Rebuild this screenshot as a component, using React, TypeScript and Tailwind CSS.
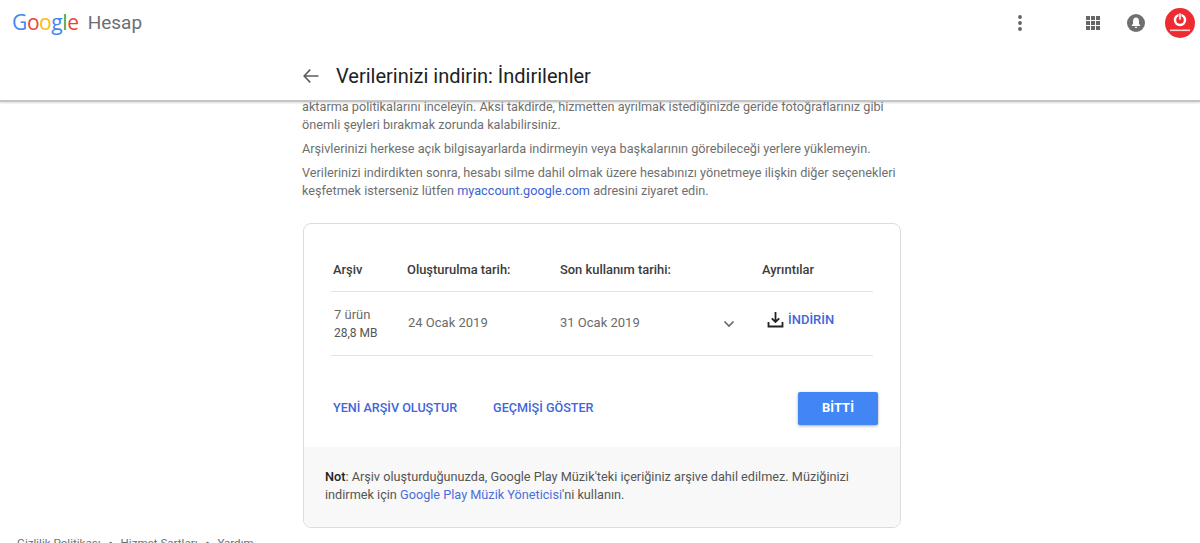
import React from "react";

const font = { fontFamily: "Roboto, sans-serif" };

function Topbar() {
  return (
    <div className="flex h-[45px] items-center pl-[12px] pr-[5px]">
      <div className="flex items-center text-[21px] leading-none tracking-[-0.4px] font-['Open_Sans',sans-serif]">
        <span className="text-[#4285f4]">G</span>
        <span className="text-[#ea4335]">o</span>
        <span className="text-[#fbbc05]">o</span>
        <span className="text-[#4285f4]">g</span>
        <span className="text-[#34a853]">l</span>
        <span className="text-[#ea4335]">e</span>
      </div>
      <span className="ml-[9px] text-[19px] leading-none text-[#6b6f73]">Hesap</span>
      <div className="ml-auto flex items-center">
        <svg width="6" height="18" viewBox="0 0 6 18" className="mr-[62px]" fill="#5f6368">
          <circle cx="3" cy="3" r="1.9" /><circle cx="3" cy="9" r="1.9" /><circle cx="3" cy="15" r="1.9" />
        </svg>
        <svg width="16" height="16" viewBox="0 0 16 16" className="mr-[26px]" fill="#666">
          <rect x="1" y="1" width="4" height="4" /><rect x="6" y="1" width="4" height="4" /><rect x="11" y="1" width="4" height="4" />
          <rect x="1" y="6" width="4" height="4" /><rect x="6" y="6" width="4" height="4" /><rect x="11" y="6" width="4" height="4" />
          <rect x="1" y="11" width="4" height="4" /><rect x="6" y="11" width="4" height="4" /><rect x="11" y="11" width="4" height="4" />
        </svg>
        <svg width="18" height="18" viewBox="0 0 18 18" className="mr-[20px]">
          <circle cx="9" cy="9" r="9" fill="#6f6f6f" />
          <path d="M9 3.6c-2 0-3 1.6-3 3.5v2.6L4.8 11.3v.7h8.4v-.7L12 9.700V7.100C12 5.200 11 3.600 9 3.600z" fill="#fff" />
          <path d="M7.700 12.700h2.600c0 .8-.6 1.300-1.300 1.300s-1.300-.5-1.300-1.300z" fill="#fff" />
        </svg>
        <svg width="30" height="30" viewBox="0 0 30 30">
          <circle cx="15" cy="15" r="15" fill="#ee2a33" />
          <circle cx="15" cy="12" r="5" fill="none" stroke="#fff" strokeWidth="2.400" />
          <rect x="13.900" y="5" width="2.200" height="7" fill="#fff" stroke="#ee2a33" strokeWidth="0.600" />
          <rect x="5" y="21.500" width="20" height="1.600" fill="#fff" opacity="0.800" />
        </svg>
      </div>
    </div>
  );
}

function Header() {
  return (
    <header className="relative z-10 h-[102px] border-b-2 border-[#c4c4c4] bg-white shadow-[0_1px_2px_rgba(0,0,0,0.15)]">
      <Topbar />
      <div className="mx-auto flex h-[62px] w-[600px] items-center pl-[2px]">
        <svg width="18" height="18" viewBox="0 0 24 24" fill="none" stroke="#5f5a60" strokeWidth="2">
          <path d="M22 12H3M11 3.500 2.800 12l8.200 8.500" />
        </svg>
        <h1 className="ml-[16px] text-[20px] leading-none font-normal text-[#202124]">Verilerinizi indirin: İndirilenler</h1>
      </div>
    </header>
  );
}

function Intro() {
  return (
    <div className="mx-auto -mt-[4px] w-[600px] pl-[2px] text-[12.7px] leading-[18px] text-[#6f6f6f]">
      <p>
        aktarma politikalarını inceleyin. Aksi takdirde, hizmetten ayrılmak istediğinizde geride fotoğraflarınız gibi
        <br />
        önemli şeyleri bırakmak zorunda kalabilirsiniz.
      </p>
      <p className="mt-[6px]">Arşivlerinizi herkese açık bilgisayarlarda indirmeyin veya başkalarının görebileceği yerlere yüklemeyin.</p>
      <p className="mt-[6px]">
        Verilerinizi indirdikten sonra, hesabı silme dahil olmak üzere hesabınızı yönetmeye ilişkin diğer seçenekleri
        <br />
        keşfetmek isterseniz lütfen <span className="text-[#3b62d6]">myaccount.google.com</span> adresini ziyaret edin.
      </p>
    </div>
  );
}

function ArchiveTable() {
  return (
    <div className="mx-[27px] mt-[27px]">
      <div className="grid h-[41px] grid-cols-[74px_153px_202px_1fr] items-center border-b border-[#e3e3e3] pb-[2px] pl-[2px] text-[12.9px] font-medium text-[#3c3c3c]">
        <span>Arşiv</span>
        <span>Oluşturulma tarih:</span>
        <span>Son kullanım tarihi:</span>
        <span>Ayrıntılar</span>
      </div>
      <div className="grid h-[64px] grid-cols-[74px_152px_160px_42px_1fr] items-center border-b border-[#e3e3e3] pl-[3px] text-[13px] text-[#6b6b6b]">
        <div className="mt-[1px] leading-[18px]">
          <div>7 ürün</div>
          <div className="text-[12px] text-[#555]">28,8 MB</div>
        </div>
        <span className="-mt-[2px]">24 Ocak 2019</span>
        <span className="-mt-[2px]">31 Ocak 2019</span>
        <svg width="12" height="8" viewBox="0 0 12 8" fill="none" stroke="#6b6b6b" strokeWidth="1.700" className="ml-[3px]">
          <path d="M1.500 1.500 6 6l4.500-4.500" />
        </svg>
        <div className="-mt-[8px] flex items-center pl-[5px]">
          <svg width="17" height="17" viewBox="0 0 17 17" fill="none" stroke="#222" strokeWidth="1.800">
            <path d="M8.500 1v9.500M4.800 7.300l3.700 3.700 3.700-3.700" />
            <path d="M1.500 11v4.500h14V11" />
          </svg>
          <span className="ml-[4px] font-medium text-[#3f66dc]">İNDİRİN</span>
        </div>
      </div>
    </div>
  );
}

function Card() {
  return (
    <section className="mx-auto mt-[23px] w-[598px] translate-x-[2px] overflow-hidden rounded-[8px] border border-[#dcdcdc]">
      <ArchiveTable />
      <div className="flex h-[91px] items-center pl-[29px] pr-[22px] pt-[13px] text-[12.6px] font-medium text-[#3f66dc]">
        <span>YENİ ARŞİV OLUŞTUR</span>
        <span className="ml-[36px]">GEÇMİŞİ GÖSTER</span>
        <button className="ml-auto h-[33px] w-[80px] rounded-[2px] bg-[#4285f4] text-[13px] font-bold text-white shadow-[0_1px_3px_rgba(0,0,0,0.35)]">BİTTİ</button>
      </div>
      <div className="h-[80px] bg-[#f8f8f8] pl-[21px] pt-[21px] text-[12.7px] leading-[18px] text-[#555]">
        <b className="font-medium text-[#222]">Not</b>: Arşiv oluşturduğunuzda, Google Play Müzik'teki içeriğiniz arşive dahil edilmez. Müziğinizi
        <br />
        indirmek için <span className="text-[#4a6fdc]">Google Play Müzik Yöneticisi</span>'ni kullanın.
      </div>
    </section>
  );
}

export default function App() {
  return (
    <div className="h-[543px] w-[1200px] overflow-hidden bg-white" style={font}>
      <Header />
      <Intro />
      <Card />
      <footer className="mt-[7px] flex gap-[8px] pl-[17px] text-[11.6px] leading-[16px] text-[#6f6f6f]">
        <span>Gizlilik Politikası</span><span>•</span><span>Hizmet Şartları</span><span>•</span><span>Yardım</span>
      </footer>
    </div>
  );
}
